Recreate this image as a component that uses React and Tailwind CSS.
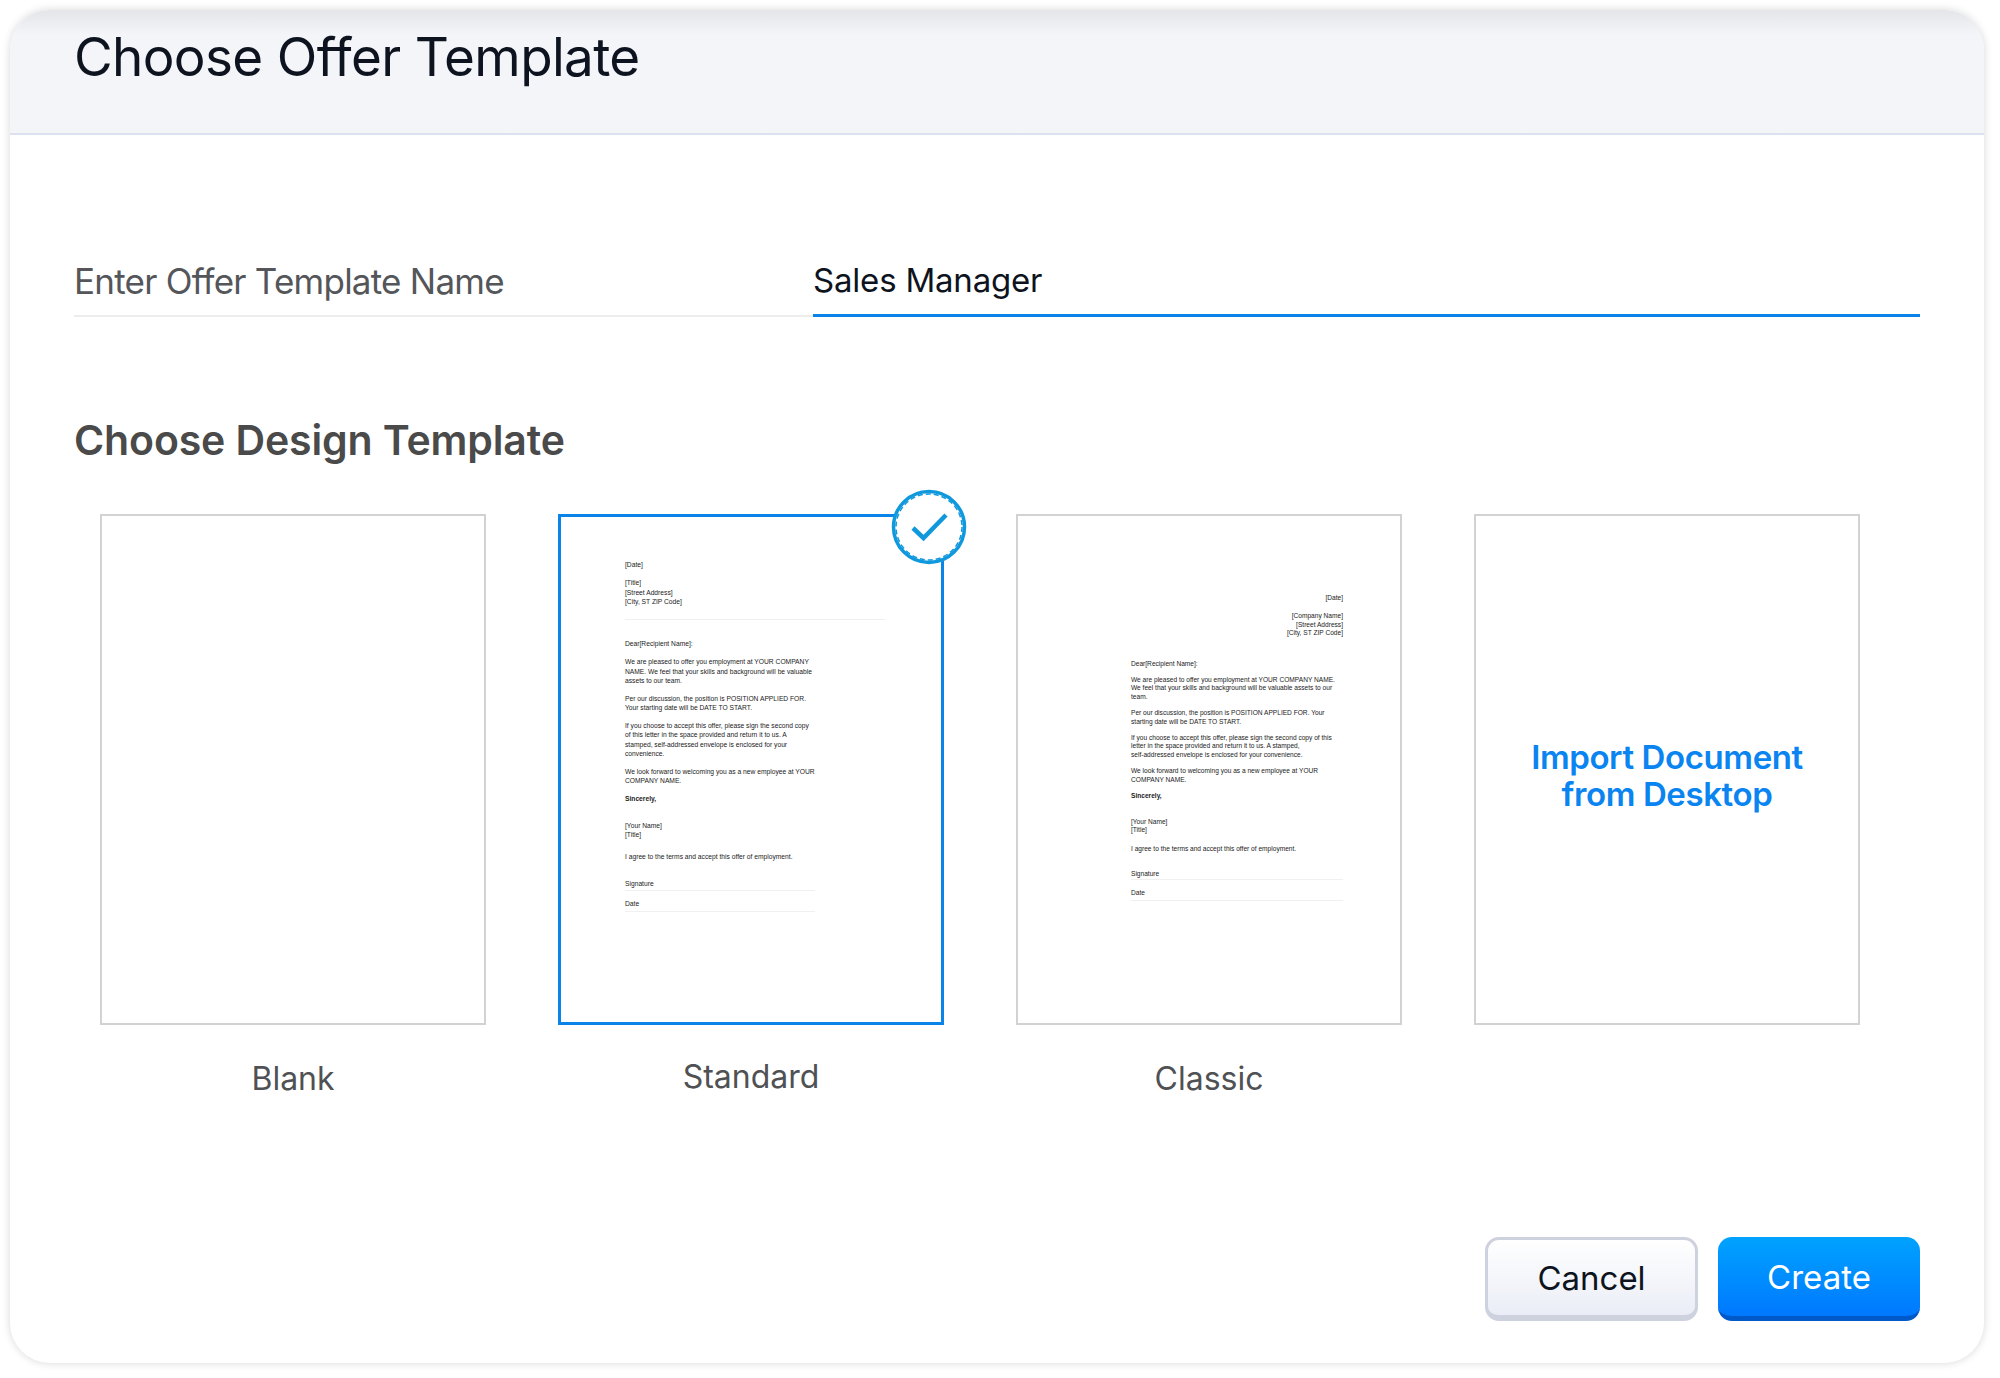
const F = "font-['Inter','Liberation_Sans',sans-serif]";

function Doc({ groups, className }) {
  return (
    <div className={className}>
      {groups.map((g, i) => (
        <div key={i} className={g.cls}>
          {g.lines.map((l, j) => (
            <div key={j} className="whitespace-nowrap">{l}</div>
          ))}
          {g.rule ? <div className={g.rule} /> : null}
        </div>
      ))}
    </div>
  );
}

const standard = [
  { cls: "", lines: ["[Date]"] },
  { cls: "mt-[9px]", lines: ["[Title]", "[Street Address]", "[City, ST ZIP Code]"] },
  { cls: "mt-[13px] mb-[19px] h-px bg-[#f0f0f0] w-[260px]", lines: [] },
  { cls: "", lines: ["Dear[Recipient Name]:"] },
  { cls: "mt-[9px]", lines: ["We are pleased to offer you employment at YOUR COMPANY", "NAME. We feel that your skills and background will be valuable", "assets to our team."] },
  { cls: "mt-[8.5px]", lines: ["Per our discussion, the position is POSITION APPLIED FOR.", "Your starting date will be DATE TO START."] },
  { cls: "mt-[8.5px]", lines: ["If you choose to accept this offer, please sign the second copy", "of this letter in the space provided and return it to us. A", "stamped, self-addressed envelope is enclosed for your", "convenience."] },
  { cls: "mt-[8.5px]", lines: ["We look forward to welcoming you as a new employee at YOUR", "COMPANY NAME."] },
  { cls: "mt-[8.5px] font-bold", lines: ["Sincerely,"] },
  { cls: "mt-[18px]", lines: ["[Your Name]", "[Title]"] },
  { cls: "mt-[12px]", lines: ["I agree to the terms and accept this offer of employment."] },
  { cls: "mt-[18px]", lines: ["Signature"], rule: "mt-[2px] h-px bg-[#f0f0f0] w-[190px]" },
  { cls: "mt-[8px]", lines: ["Date"], rule: "mt-[2px] h-px bg-[#f0f0f0] w-[190px]" },
];

const classic = [
  { cls: "text-right", lines: ["[Date]"] },
  { cls: "mt-[10px] text-right", lines: ["[Company Name]", "[Street Address]", "[City, ST ZIP Code]"] },
  { cls: "mt-[22px]", lines: ["Dear[Recipient Name]:"] },
  { cls: "mt-[8px]", lines: ["We are pleased to offer you employment at YOUR COMPANY NAME.", "We feel that your skills and background will be valuable assets to our", "team."] },
  { cls: "mt-[8px]", lines: ["Per our discussion, the position is POSITION APPLIED FOR. Your", "starting date will be DATE TO START."] },
  { cls: "mt-[8px]", lines: ["If you choose to accept this offer, please sign the second copy of this", "letter in the space provided and return it to us. A stamped,", "self-addressed envelope is enclosed for your convenience."] },
  { cls: "mt-[8px]", lines: ["We look forward to welcoming you as a new employee at YOUR", "COMPANY NAME."] },
  { cls: "mt-[8px] font-bold", lines: ["Sincerely,"] },
  { cls: "mt-[17px]", lines: ["[Your Name]", "[Title]"] },
  { cls: "mt-[11px]", lines: ["I agree to the terms and accept this offer of employment."] },
  { cls: "mt-[16px]", lines: ["Signature"], rule: "mt-px h-px bg-[#f0f0f0] w-[212px]" },
  { cls: "mt-[9px]", lines: ["Date"], rule: "mt-[2px] h-px bg-[#f0f0f0] w-[212px]" },
];

function Check() {
  return (
    <svg width="76" height="76" viewBox="0 0 76 76" className="absolute -top-[28px] -right-[26px]">
      <circle cx="38" cy="38" r="35.5" fill="#ffffff" stroke="#1098dd" strokeWidth="3.5" />
      <circle cx="38" cy="38" r="33" fill="none" stroke="#1098dd" strokeWidth="1.5" strokeDasharray="5 3" />
      <path d="M22 39 L32.5 49 L55 26" fill="none" stroke="#1098dd" strokeWidth="4.5" />
    </svg>
  );
}

function Template({ label, labelCls, boxCls, children }) {
  return (
    <div className="w-[386px] flex flex-col items-center">
      <div className={`relative w-full h-[511px] ${boxCls}`}>{children}</div>
      <div className={`text-[32px] leading-[40px] text-[#4f5154] ${labelCls}`}>{label}</div>
    </div>
  );
}

export default function App() {
  return (
    <div className={`w-[2000px] h-[1378px] bg-white pl-[10px] pr-[16px] pt-[10px] pb-[15px] ${F}`}>
      <div className="h-full rounded-[40px] bg-white shadow-[0_0_8px_rgba(0,0,0,0.16)] overflow-hidden flex flex-col">
        <div className="h-[125px] shrink-0 bg-[#f4f5f9] border-b-2 border-[#dbe1ef] bg-gradient-to-b from-[#e4e5e9] via-[#f4f5f9] via-[20%] to-[#f4f5f9] pl-[64px] pt-[17px]">
          <h1 className="text-[53px] leading-[60px] font-normal text-[#0e1320] tracking-[-0.66px]">Choose Offer Template</h1>
        </div>
        <div className="flex-1 pl-[64px] pr-[64px] flex flex-col">
          <div className="mt-[122px] flex h-[60px]">
            <div className="w-[739px] border-b-2 border-[#ececec] text-[35px] leading-[48px] text-[#54565a] tracking-[-0.76px]">Enter Offer Template Name</div>
            <div className="flex-1 border-b-[3px] border-[#0a84e8] text-[33px] leading-[46px] text-[#0e1320] tracking-[-0.2px]">Sales Manager</div>
          </div>
          <h2 className="mt-[98px] text-[41px] leading-[50px] font-semibold text-[#4a4a4a] tracking-[-0.13px]">Choose Design Template</h2>
          <div className="mt-[49px] ml-[26px] flex gap-[72px]">
            <Template label="Blank" labelCls="mt-[34px]" boxCls="border-2 border-[#d2d2d2]" />
            <Template label="Standard" labelCls="mt-[32px]" boxCls="border-[3px] border-[#0a84e8]">
              <Doc groups={standard} className="pl-[64px] pt-[43px] font-['Liberation_Sans',sans-serif] text-[6.7px] leading-[9.3px] text-[#222222]" />
              <Check />
            </Template>
            <Template label="Classic" labelCls="mt-[34px]" boxCls="border-2 border-[#d2d2d2]">
              <Doc groups={classic} className="ml-[113px] w-[212px] pt-[78px] font-['Liberation_Sans',sans-serif] text-[6.6px] leading-[8.4px] text-[#222222]" />
            </Template>
            <Template label="" labelCls="mt-[34px]" boxCls="border-2 border-[#d2d2d2] flex items-center justify-center pt-[12px]">
              <div className="text-center text-[33px] leading-[37px] font-semibold text-[#0a84f0] tracking-[-0.4px]">Import Document<br />from Desktop</div>
            </Template>
          </div>
          <div className="mt-auto mb-[42px] flex justify-end gap-[20px]">
            <button className="w-[213px] h-[84px] pt-[2px] rounded-[14px] border-[3px] border-b-[6px] border-[#cdd2de] bg-gradient-to-b from-white to-[#eaedf6] text-[33px] text-[#0e1320]">Cancel</button>
            <button className="w-[202px] h-[84px] pt-[2px] rounded-[14px] border-b-[5px] border-[#0059c8] bg-gradient-to-b from-[#00a2ff] to-[#0078ff] text-[33px] text-white">Create</button>
          </div>
        </div>
      </div>
    </div>
  );
}
